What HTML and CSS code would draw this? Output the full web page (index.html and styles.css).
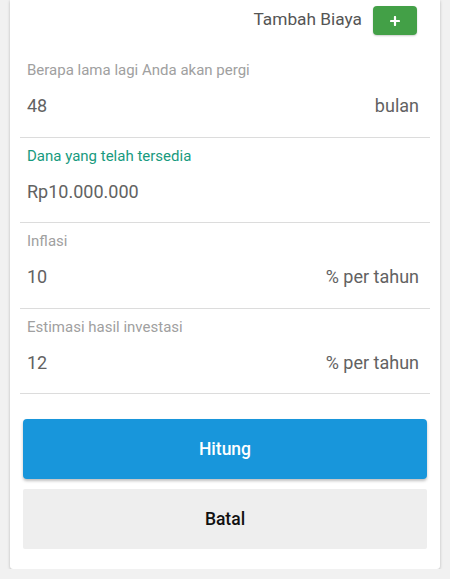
FILE: index.html
```html
<!DOCTYPE html>
<html lang="id">
<head>
<meta charset="UTF-8" />
<meta name="viewport" content="width=device-width, initial-scale=1" />
<title>Rencana Biaya</title>
<link rel="stylesheet" href="styles.css">
</head>
<body>
  <div class="card">
    <div class="add-row">
      <span class="add-label">Tambah Biaya</span>
      <button class="add-btn" aria-label="Tambah Biaya">
        <svg width="10" height="10" viewBox="0 0 10 10">
          <path d="M5 1v8M1 5h8" stroke="#fff" stroke-width="2.2" stroke-linecap="round" fill="none"/>
        </svg>
      </button>
    </div>

    <div class="field">
      <div class="field-label">Berapa lama lagi Anda akan pergi</div>
      <div class="field-value">
        <span>48</span>
        <span class="unit">bulan</span>
      </div>
    </div>

    <div class="field">
      <div class="field-label active">Dana yang telah tersedia</div>
      <div class="field-value">
        <span>Rp10.000.000</span>
      </div>
    </div>

    <div class="field">
      <div class="field-label">Inflasi</div>
      <div class="field-value">
        <span>10</span>
        <span class="unit">% per tahun</span>
      </div>
    </div>

    <div class="field">
      <div class="field-label">Estimasi hasil investasi</div>
      <div class="field-value">
        <span>12</span>
        <span class="unit">% per tahun</span>
      </div>
    </div>

    <div class="actions">
      <button class="btn btn-primary">Hitung</button>
      <button class="btn btn-cancel">Batal</button>
    </div>
  </div>
</body>
</html>
```

FILE: styles.css
```css
/* Reset & base */
* {
  box-sizing: border-box;
}
html, body {
  margin: 0;
  padding: 0;
  background: #f1f1f1;
  font-family: Roboto, 'Noto Sans', sans-serif;
}

/* Card */
.card {
  margin: 0 10px;
  padding: 6px 10px 20px;
  background: #fff;
  border-radius: 0 0 3px 3px;
  box-shadow: 0 1px 3px rgba(0,0,0,0.25);
}

/* Tambah Biaya row */
.add-row {
  display: flex;
  justify-content: flex-end;
  align-items: center;
  gap: 11px;
  padding-right: 13px;
  height: 29px;
}
.add-label {
  font-size: 17.3px;
  color: #555;
  margin-top: -4px;
}
.add-btn {
  width: 44px;
  height: 29px;
  border: none;
  border-radius: 4px;
  background: #43a047;
  box-shadow: 0 1px 2px rgba(0,0,0,0.2);
  display: flex;
  align-items: center;
  justify-content: center;
  padding: 0;
}

/* Fields */
.field {
  padding: 8px 11px 18.5px 7px;
  border-bottom: 1px solid #dcdcdc;
}
.add-row + .field {
  margin-top: 17px;
}
.field-label {
  font-size: 15px;
  line-height: 20px;
  color: #a0a0a0;
}
.field-label.active {
  color: #179a7e;
}
.field-value {
  display: flex;
  justify-content: space-between;
  margin-top: 14px;
  font-size: 18px;
  line-height: 24px;
  color: #626262;
}

/* Buttons */
.actions {
  display: flex;
  flex-direction: column;
  gap: 10px;
  padding: 25px 3px 0;
}
.btn {
  height: 60px;
  border: none;
  border-radius: 4px;
  font-family: inherit;
  font-size: 17.5px;
  font-weight: 500;
}
.btn-primary {
  background: #1896db;
  color: #fff;
  box-shadow: 0 2px 3px rgba(0,0,0,0.25);
}
.btn-cancel {
  background: #eeeeee;
  color: #111;
  border-radius: 2px;
}
```
